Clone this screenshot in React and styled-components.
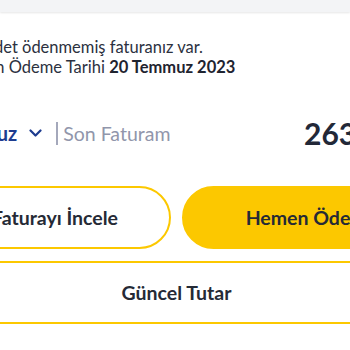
import React from "react";
import styled, { createGlobalStyle } from "styled-components";

const Global = createGlobalStyle`
  html, body {
    margin: 0;
    background: #ffffff;
    overflow: hidden;
  }
  body {
    font-family: 'Lato', 'Noto Sans', sans-serif;
    color: #252a36;
  }
`;

const TopBar = styled.div`
  height: 12px;
  background: #f3f4f6;
  box-shadow: 0 1px 2px rgba(0, 0, 0, 0.1);
`;

const Card = styled.div`
  margin-left: -61px;
  width: 475px;
  padding-top: 25px;
`;

const Info = styled.div`
  padding-left: 36px;
  font-size: 16.5px;
  line-height: 20px;
  color: #2c3140;
  white-space: nowrap;
`;

const InfoLine = styled.div`
  margin-left: ${p => p.$shift || 0}px;
`;

const Strong = styled.b`
  font-weight: 700;
  color: #1f2430;
`;

const BillRow = styled.div`
  display: flex;
  align-items: center;
  margin-top: 40px;
  margin-right: -24px;
  padding-left: 4px;
  height: 32px;
  white-space: nowrap;
`;

const Month = styled.button`
  display: flex;
  align-items: center;
  gap: 12px;
  padding: 0;
  border: none;
  background: none;
  font-family: inherit;
  font-size: 20px;
  font-weight: 700;
  color: #1d3c8f;
`;

const Divider = styled.span`
  width: 2px;
  height: 23px;
  margin: 0 5px 0 14px;
  background: #a4a8bb;
`;

const Label = styled.span`
  font-size: 19.5px;
  color: #9196ab;
`;

const Amount = styled.span`
  margin-left: auto;
  font-size: 30px;
  font-weight: 700;
  color: #222838;
`;

const Actions = styled.div`
  display: grid;
  grid-template-columns: 1fr 1fr;
  gap: 11px;
  margin-top: 37px;
`;

const Button = styled.button`
  height: 63px;
  border-radius: 32px;
  border: 2px solid #fcc800;
  background: ${p => (p.$filled ? "#fcc800" : "#ffffff")};
  font-family: inherit;
  font-size: 19.5px;
  font-weight: 700;
  color: #252a36;
  white-space: nowrap;
`;

const WideButton = styled.button`
  display: block;
  width: 100%;
  height: 63px;
  margin-top: 12px;
  border: 2px solid #fcc800;
  border-radius: 4px;
  background: #ffffff;
  font-family: inherit;
  font-size: 19.5px;
  font-weight: 700;
  color: #252a36;
`;

function Chevron() {
  return (
    <svg width="13" height="8" viewBox="0 0 13 8" fill="none">
      <path d="M1.5 1.5l5 5 5-5" stroke="#1d3c8f" strokeWidth="2.2" strokeLinecap="round" strokeLinejoin="round" />
    </svg>
  );
}

export default function App() {
  return (
    <>
      <Global />
      <TopBar />
      <Card>
        <Info>
          <InfoLine $shift={-3}>1 adet ödenmemiş faturanız var.</InfoLine>
          <InfoLine $shift={2}>
            Son Ödeme Tarihi <Strong>20 Temmuz 2023</Strong>
          </InfoLine>
        </Info>
        <BillRow>
          <Month>
            Temmuz <Chevron />
          </Month>
          <Divider />
          <Label>Son Faturam</Label>
          <Amount>263,45 TL</Amount>
        </BillRow>
        <Actions>
          <Button>Faturayı İncele</Button>
          <Button $filled>Hemen Öde</Button>
        </Actions>
        <WideButton>Güncel Tutar</WideButton>
      </Card>
    </>
  );
}
